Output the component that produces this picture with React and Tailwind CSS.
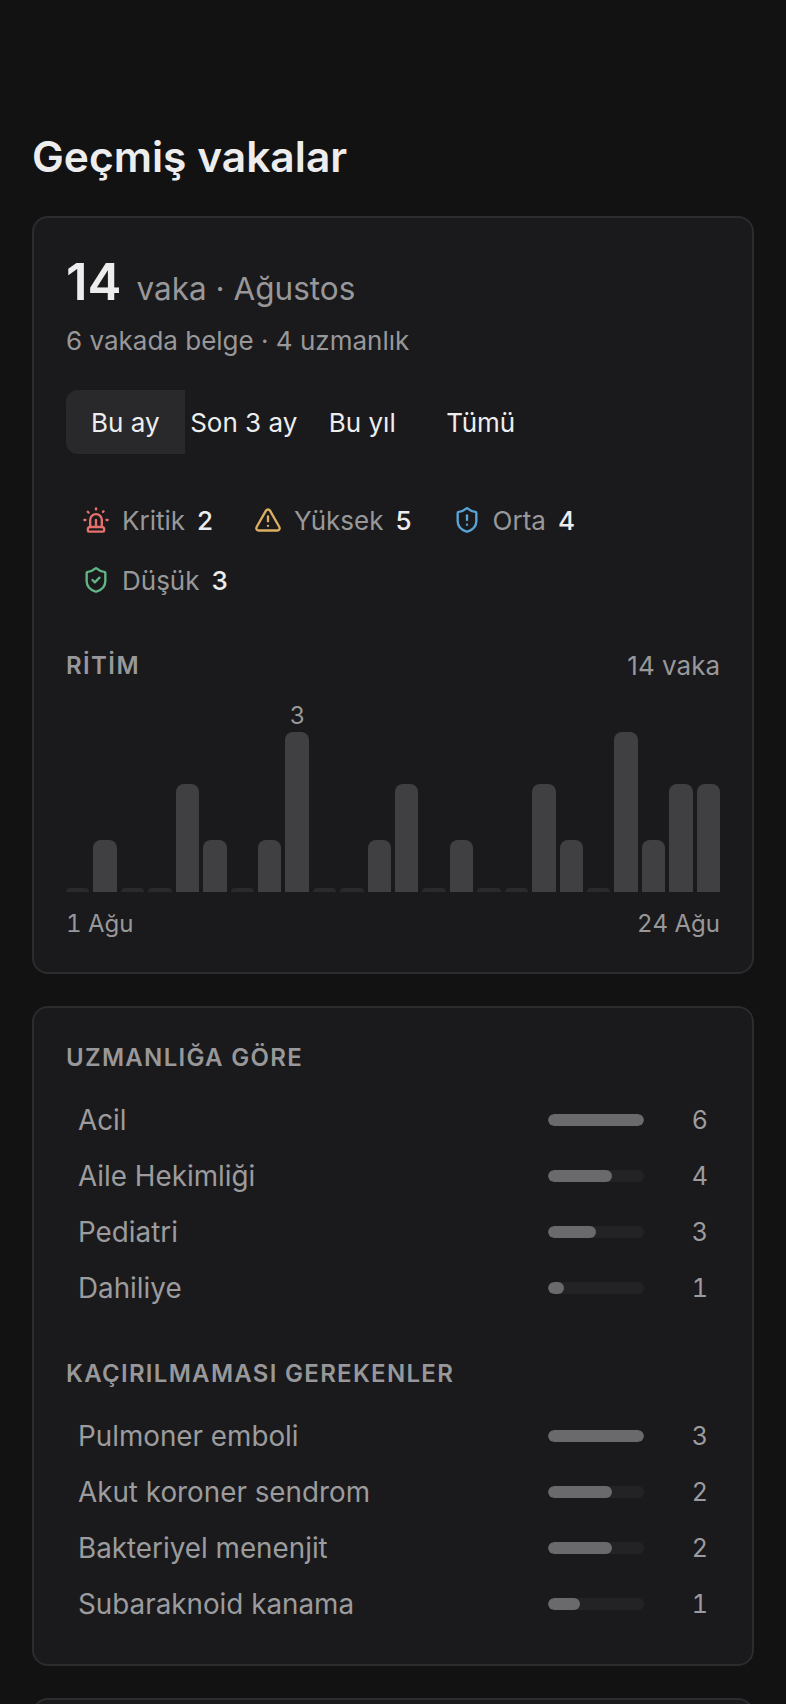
import { Siren, TriangleAlert, ShieldAlert, ShieldCheck } from 'lucide-react'

const TABS = ['Bu ay', 'Son 3 ay', 'Bu yıl', 'Tümü']

const SEVERITY = [
  { icon: Siren, label: 'Kritik', count: 2, color: 'text-[#e5706c]' },
  { icon: TriangleAlert, label: 'Yüksek', count: 5, color: 'text-[#dcae62]' },
  { icon: ShieldAlert, label: 'Orta', count: 4, color: 'text-[#5aa5d8]' },
  { icon: ShieldCheck, label: 'Düşük', count: 3, color: 'text-[#62b585]' },
]

const DAYS = [0, 1, 0, 0, 2, 1, 0, 1, 3, 0, 0, 1, 2, 0, 1, 0, 0, 2, 1, 0, 3, 1, 2, 2]
const BAR_HEIGHTS = [4, 52, 108, 160]

const SPECIALTIES = [
  { label: 'Acil', count: 6, pct: 100 },
  { label: 'Aile Hekimliği', count: 4, pct: 67 },
  { label: 'Pediatri', count: 3, pct: 50 },
  { label: 'Dahiliye', count: 1, pct: 17 },
]

const MUST_NOT_MISS = [
  { label: 'Pulmoner emboli', count: 3, pct: 100 },
  { label: 'Akut koroner sendrom', count: 2, pct: 67 },
  { label: 'Bakteriyel menenjit', count: 2, pct: 67 },
  { label: 'Subaraknoid kanama', count: 1, pct: 33 },
]

function BarRow({ row }) {
  return (
    <div className="flex h-14 items-center pl-3 pr-3">
      <span className="flex-1 pt-0.5 text-[27.8px] text-[#9c9c9e]">{row.label}</span>
      <div className="h-3 w-24 overflow-hidden rounded-full bg-[#232325]">
        <div className="h-full rounded-full bg-[#6a6a6c]" style={{ width: `${row.pct}%` }} />
      </div>
      <span className="w-16 pt-0.5 text-right text-[25px] text-[#9c9c9e] tabular-nums">{row.count}</span>
    </div>
  )
}

function Section({ title, rows }) {
  return (
    <div>
      <h2 className="mb-[18px] text-[24px] leading-8 font-semibold tracking-[1.3px] text-[#98989a]">{title}</h2>
      {rows.map((row) => (
        <BarRow key={row.label} row={row} />
      ))}
    </div>
  )
}

export default function App() {
  return (
    <div className="h-[1704px] overflow-hidden bg-[#121213] px-8 pt-[128px] font-['Inter',sans-serif]">
      <h1 className="text-[42.5px] leading-[58px] font-semibold text-[#ededee]">Geçmiş vakalar</h1>

      <section className="mt-[30px] h-[758px] rounded-2xl border-2 border-[#2c2c2e] bg-[#1a1a1c] px-8 pt-[34px]">
        <div className="flex items-baseline gap-[15px]">
          <span className="text-[51px] leading-[60px] font-semibold text-[#ededee]">14</span>
          <span className="text-[31.5px] leading-[45px] text-[#98989a]">vaka · Ağustos</span>
        </div>
        <p className="mt-[11px] text-[26px] leading-9 text-[#98989a]">6 vakada belge · 4 uzmanlık</p>

        <div className="mt-[31px] flex">
          {TABS.map((tab, i) => (
            <button
              key={tab}
              className={`h-16 w-[118.5px] text-[26px] text-[#ededee] ${i === 0 ? 'rounded-l-xl bg-[#29292b]' : ''}`}
            >
              {tab}
            </button>
          ))}
        </div>

        <div className="mt-12 flex flex-wrap gap-x-[41px] gap-y-6 pl-4">
          {SEVERITY.map(({ icon: Icon, label, count, color }) => (
            <div key={label} className="flex h-9 items-center">
              <Icon className={`mr-3 h-7 w-7 ${color}`} strokeWidth={2} />
              <span className="text-[26px] text-[#98989a]">{label}</span>
              <span className="ml-3 text-[26px] font-medium text-[#ededee]">{count}</span>
            </div>
          ))}
        </div>

        <div className="mt-[49px] flex items-center justify-between leading-[38px]">
          <span className="text-[24px] font-semibold tracking-[1.4px] text-[#98989a]">RİTİM</span>
          <span className="text-[26px] text-[#98989a]">14 vaka</span>
        </div>

        <div className="mt-[9px] flex h-[198px] items-end gap-1">
          {DAYS.map((v, i) => (
            <div key={i} className="flex flex-1 flex-col items-center">
              {i === 8 && <span className="mb-0.5 text-[24px] leading-7 text-[#98989a]">3</span>}
              <div
                className={`w-full rounded-t-lg ${v === 0 ? 'bg-[#2a2a2c]' : 'bg-[#404042]'}`}
                style={{ height: BAR_HEIGHTS[v] }}
              />
            </div>
          ))}
        </div>

        <div className="mt-[14px] flex justify-between text-[24px] leading-9 text-[#98989a] tabular-nums">
          <span>1 Ağu</span>
          <span>24 Ağu</span>
        </div>
      </section>

      <section className="mt-8 h-[660px] rounded-2xl border-2 border-[#2c2c2e] bg-[#1a1a1c] px-8 pt-[34px]">
        <Section title="UZMANLIĞA GÖRE" rows={SPECIALTIES} />
        <div className="mt-[42px]">
          <Section title="KAÇIRILMAMASI GEREKENLER" rows={MUST_NOT_MISS} />
        </div>
      </section>

      <section className="mt-8 h-40 rounded-2xl border-2 border-[#2c2c2e] bg-[#1a1a1c]" />
    </div>
  )
}
